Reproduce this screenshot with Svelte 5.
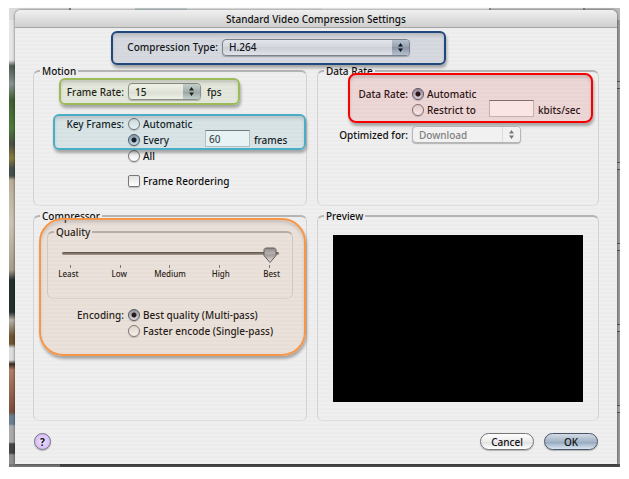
<script>
  let codec = $state("H.264");
  let frameRate = $state("15");
  let keyFrames = $state("every");
  let keyEvery = $state("60");
  let reorder = $state(false);
  let dataRate = $state("automatic");
  let rateLimit = $state("");
  let target = $state("Download");
  let quality = $state(4);
  let encoding = $state("best");

  const levels = ["Least", "Low", "Medium", "High", "Best"];
</script>

{#snippet arrows()}
  <svg class="arrows" width="17" height="15" viewBox="0 0 17 15" aria-hidden="true">
    <path d="M8.500 3L11 6.500H6zM8.500 12L11 8.500H6z" />
  </svg>
{/snippet}

<div class="desktop">
  <main class="dialog">
    <h1>Standard Video Compression Settings</h1>

    <div class="body">
      <div class="callout blue row">
        <label class="name" for="codec">Compression Type:</label>
        <span class="popup">
          <select id="codec" bind:value={codec}>
            <option>H.264</option>
            <option>MPEG-4 Video</option>
          </select>
          {@render arrows()}
        </span>
      </div>

      <div class="groups">
        <fieldset>
          <legend>Motion</legend>
          <div class="callout green row">
            <label class="name" for="rate">Frame Rate:</label>
            <span class="popup">
              <select id="rate" bind:value={frameRate}>
                <option>15</option>
                <option>24</option>
                <option>30</option>
              </select>
              {@render arrows()}
            </span>
            <span class="unit">fps</span>
          </div>
          <div class="callout teal">
            <div class="row">
              <span class="name">Key Frames:</span>
              <label><input type="radio" value="automatic" bind:group={keyFrames} />Automatic</label>
            </div>
            <div class="row">
              <span class="name"></span>
              <label class="every"><input type="radio" value="every" bind:group={keyFrames} />Every</label>
              <input class="text" id="every" type="text" bind:value={keyEvery} />
              <label for="every">frames</label>
            </div>
          </div>
          <div class="row">
            <span class="name"></span>
            <label><input type="radio" value="all" bind:group={keyFrames} />All</label>
          </div>
          <div class="row reorder">
            <span class="name"></span>
            <label><input type="checkbox" bind:checked={reorder} />Frame Reordering</label>
          </div>
        </fieldset>

        <fieldset>
          <legend>Data Rate</legend>
          <div class="callout red">
            <div class="row">
              <span class="name">Data Rate:</span>
              <label><input type="radio" value="automatic" bind:group={dataRate} />Automatic</label>
            </div>
            <div class="row">
              <span class="name"></span>
              <label class="restrict"><input type="radio" value="restrict" bind:group={dataRate} />Restrict to</label>
              <input class="text" id="limit" type="text" bind:value={rateLimit} />
              <label for="limit">kbits/sec</label>
            </div>
          </div>
          <div class="row optimized">
            <label class="name" for="target">Optimized for:</label>
            <span class="popup off">
              <select id="target" bind:value={target} disabled>
                <option>Download</option>
                <option>Streaming</option>
              </select>
              {@render arrows()}
            </span>
          </div>
        </fieldset>

        <fieldset>
          <legend>Compressor</legend>
          <div class="callout orange">
            <fieldset class="quality">
              <legend>Quality</legend>
              <div class="slider">
                <input type="range" min="0" max="4" bind:value={quality} aria-label="Quality" />
                <div class="rail">
                  <svg
                    class="thumb"
                    style:left="{quality * 25}%"
                    width="14"
                    height="17"
                    viewBox="0 0 14 17"
                    aria-hidden="true"
                  >
                    <defs>
                      <linearGradient id="metal" x2="0" y2="1">
                        <stop offset="0" stop-color="#83878c" />
                        <stop offset=".35" stop-color="#b4b8bc" />
                        <stop offset=".5" stop-color="#9da3a9" />
                        <stop offset="1" stop-color="#f4f6f8" />
                      </linearGradient>
                    </defs>
                    <path
                      d="M2.500 1h9l1.500 1.500v6L7 15.500 1 8.500v-6z"
                      fill="url(#metal)"
                      stroke="#55575a"
                      stroke-linejoin="round"
                    />
                  </svg>
                </div>
              </div>
              <div class="ticks">
                {#each levels as level}
                  <i></i>
                {/each}
              </div>
              <div class="levels">
                {#each levels as level}
                  <span>{level}</span>
                {/each}
              </div>
            </fieldset>
            <div class="row">
              <span class="name">Encoding:</span>
              <label><input type="radio" value="best" bind:group={encoding} />Best quality (Multi-pass)</label>
            </div>
            <div class="row">
              <span class="name"></span>
              <label><input type="radio" value="fast" bind:group={encoding} />Faster encode (Single-pass)</label>
            </div>
          </div>
        </fieldset>

        <fieldset>
          <legend>Preview</legend>
          <div class="preview"></div>
        </fieldset>
      </div>

      <footer>
        <button class="help" aria-label="Help">?</button>
        <button>Cancel</button>
        <button class="default">OK</button>
      </footer>
    </div>
  </main>
</div>

<style>
  :global(body) {
    margin: 0;
    background: #fff;
  }
  .desktop {
    margin: 8px 9px 0;
    padding: 2px 3px 3px 6px;
    font: 500 10px/14px "Noto Sans", "Open Sans", sans-serif;
    color: #111;
    background:
      linear-gradient(90deg, #dcdcdc 0 60px, #888 60px 62px, #eee 62px 126px, #c9d3d6 126px 178px, #e8e8e8 178px 313px, #f2f2f2 313px 480px, #999 480px 482px, #ccc 482px 574px, #888 574px 576px, #bbb 576px) top / 100% 12px no-repeat,
      linear-gradient(90deg, #777 0 51px, #4a4a4a 51px) bottom / 100% 3px no-repeat,
      repeating-linear-gradient(#9d9d9d 0 73px, #555 73px 74px, #a8a8a8 74px 80px, #555 80px 81px) right / 4px 100% no-repeat,
      linear-gradient(
        #e6e6e6 0 52px,
        #4d5a4e 58px,
        #8a9390 76px,
        #3f5f32 92px,
        #4f7a3a 120px,
        #4a4e42 136px,
        #8a7c3e 150px,
        #47514b 160px 168px,
        #b9ad98 172px,
        #cdc5b5 215px,
        #a99d8c 262px,
        #26302f 272px 304px,
        #b8b4aa 312px,
        #6e5433 328px 336px,
        #ddd 340px 352px,
        #3a2a22 356px,
        #b07f68 362px,
        #7a4d3b 404px,
        #6b7f92 408px 416px,
        #aaa 418px 434px,
        #444 436px 445px,
        #8f8f8f 447px
      );
  }
  .dialog {
    border-radius: 6px 6px 0 0;
    background: repeating-linear-gradient(#efefef 0 2px, #ececec 2px 4px);
    box-shadow: 0 0 3px rgba(0, 0, 0, 0.6);
  }
  h1 {
    margin: 0;
    height: 18px;
    border-bottom: 1px solid #a5a5a5;
    border-radius: 6px 6px 0 0;
    box-sizing: border-box;
    background: linear-gradient(#f0f0f0, #cfcfcf);
    font-size: 10px;
    line-height: 18px;
    font-weight: 500;
    text-align: center;
  }
  .body {
    padding: 3px 18px 14px;
  }
  .row {
    display: flex;
    align-items: center;
    gap: 4px;
    min-height: 16px;
  }
  .name {
    flex: none;
    width: 90px;
    text-align: right;
    white-space: nowrap;
  }
  label {
    display: flex;
    align-items: center;
    gap: 3px;
    white-space: nowrap;
  }
  label.name {
    justify-content: flex-end;
  }

  .callout {
    position: relative;
    box-sizing: border-box;
  }
  .callout::after {
    content: "";
    position: absolute;
    inset: 0;
    border: 2px solid var(--line);
    border-radius: 6px;
    background: var(--tint);
    box-shadow:
      1px 3px 3px rgba(0, 0, 0, 0.3),
      inset 0 3px 3px rgba(0, 0, 0, 0.12);
    pointer-events: none;
  }
  .blue {
    --line: #1f497d;
    --tint: rgba(30, 60, 110, 0.12);
    width: 335px;
    height: 34px;
    margin-left: 78px;
    padding: 0 36px 2px 0;
  }
  .blue .name {
    width: 107px;
  }
  .blue .popup {
    flex: 1;
  }
  .green {
    --line: #9bbb59;
    --tint: rgba(145, 175, 80, 0.12);
    width: 181px;
    height: 27px;
    margin: 0 0 9px 25px;
  }
  .green .name {
    width: 65px;
  }
  .green .popup {
    width: 73px;
  }
  .unit {
    margin-left: 2px;
  }
  .teal {
    --line: #4bacc6;
    --tint: rgba(61, 145, 170, 0.12);
    margin-left: 19px;
    padding-top: 2px;
  }
  .teal::after {
    bottom: -2px;
  }
  .teal .name {
    width: 71px;
  }
  .every {
    width: 73px;
  }
  .reorder {
    margin-top: 9px;
  }
  .red {
    --line: #f60000;
    --tint: rgba(220, 50, 50, 0.13);
    margin: -5px 5px 3px 30px;
    padding: 13px 0 5px;
  }
  .red::after {
    border-radius: 8px;
  }
  .red .name {
    width: 60px;
  }
  .restrict {
    width: 73px;
  }
  .optimized .popup {
    width: 109px;
  }
  .orange {
    --line: #f79646;
    --tint: rgba(195, 120, 70, 0.12);
    margin: -5px 0 0 5px;
    padding: 7px 13px 17px 0;
  }
  .orange::after {
    border-radius: 24px;
  }
  .orange .name {
    width: 85px;
  }

  .groups {
    display: grid;
    grid-template-columns: 34fr 35fr;
    grid-template-rows: 142px 212px;
    gap: 3px 10px;
    margin-top: -1px;
  }
  fieldset {
    min-width: 0;
    margin: 0;
    padding: 0;
    border: 1px solid #d2d2d2;
    border-top: 2px solid #b4b4b4;
    border-bottom-color: #dfdfdf;
    border-radius: 6px;
  }
  legend {
    margin-left: 6px;
    padding: 0 2px;
  }
  .quality {
    height: 71px;
    margin: 0 0 8px 8px;
  }

  .popup {
    position: relative;
    display: flex;
  }
  select {
    appearance: none;
    width: 100%;
    height: 17px;
    padding: 0 20px 0 6px;
    border: 1px solid #8b8b8b;
    border-radius: 4px;
    background: linear-gradient(#fdfdfd, #ececec 50%, #e4e4e4 50%, #fafafa);
    box-shadow: 0 1px 1px rgba(0, 0, 0, 0.25);
    font: inherit;
    color: inherit;
  }
  .arrows {
    position: absolute;
    top: 1px;
    right: 1px;
    border-radius: 0 3px 3px 0;
    background: linear-gradient(#cdd5dd, #a3aeb9 50%, #96a2ae 50%, #c9d4df);
    fill: #111;
    pointer-events: none;
  }
  .off select {
    border-color: #b5b5b5;
    background: #f1f1f1;
    color: #808080;
    opacity: 1;
  }
  .off .arrows {
    border-left: 1px solid #ddd;
    background: #f1f1f1;
    fill: #777;
  }

  input {
    flex: none;
    margin: 0;
    font: inherit;
  }
  input[type="radio"],
  input[type="checkbox"] {
    appearance: none;
    box-sizing: border-box;
    width: 12px;
    height: 12px;
    border: 1px solid #777;
    border-radius: 50%;
    background: linear-gradient(#e2e2e2, #fff);
    box-shadow: 0 1px 1px rgba(0, 0, 0, 0.2);
  }
  input[type="checkbox"] {
    border-radius: 2px;
  }
  input[type="radio"]:checked {
    border-color: #4d5562;
    background:
      radial-gradient(circle, #111 0 2px, transparent 3px),
      linear-gradient(#8b98ab, #b4c0d0 50%, #dfe9f4);
  }
  .text {
    box-sizing: border-box;
    width: 45px;
    height: 17px;
    padding: 0 3px;
    margin: -3px 0 0;
    border: 1px solid #c4c4c4;
    border-top-color: #777;
    background: #fff;
    color: #444;
  }

  .slider {
    position: relative;
    height: 26px;
    padding: 0 14px;
  }
  .slider input {
    position: absolute;
    inset: 4px 14px;
    opacity: 0;
  }
  .rail {
    position: relative;
    height: 3px;
    top: 13px;
    margin: 0 8px;
    pointer-events: none;
  }
  .rail::before {
    content: "";
    position: absolute;
    inset: 0 -9px 0 -8px;
    border-radius: 2px;
    background: linear-gradient(#4b4743, #a8a29d);
  }
  .thumb {
    position: absolute;
    top: -5px;
    margin-left: -7px;
  }
  .ticks {
    display: flex;
    justify-content: space-between;
    margin: 0 22px;
  }
  .ticks i {
    width: 1px;
    height: 3px;
    background: #777;
  }
  .levels {
    display: grid;
    grid-template-columns: repeat(5, 1fr);
    margin: 0 -5px;
    font-size: 8px;
    line-height: 12px;
    text-align: center;
  }

  .preview {
    height: 167px;
    margin: 12px 15px 0;
    background: #000;
  }

  footer {
    display: flex;
    align-items: center;
    gap: 10px;
    margin: 12px 1px 0;
  }
  button {
    box-sizing: border-box;
    width: 54px;
    height: 17px;
    padding: 0;
    border: 1px solid #777;
    border-radius: 9px;
    background: linear-gradient(#fff, #ececec 50%, #dedede 50%, #fff);
    box-shadow: 0 1px 1px rgba(0, 0, 0, 0.25);
    font: inherit;
    line-height: 14px;
    color: #111;
  }
  .default {
    border-color: #4a5668;
    background: linear-gradient(#d3dbe6, #a5b4c6 50%, #8fa2b8 50%, #d9e6f3);
  }
  .help {
    width: 17px;
    margin-right: auto;
    border-color: #77717f;
    border-radius: 50%;
    background: radial-gradient(#efe2ff, #c9aef2);
    font-weight: 700;
  }
</style>
